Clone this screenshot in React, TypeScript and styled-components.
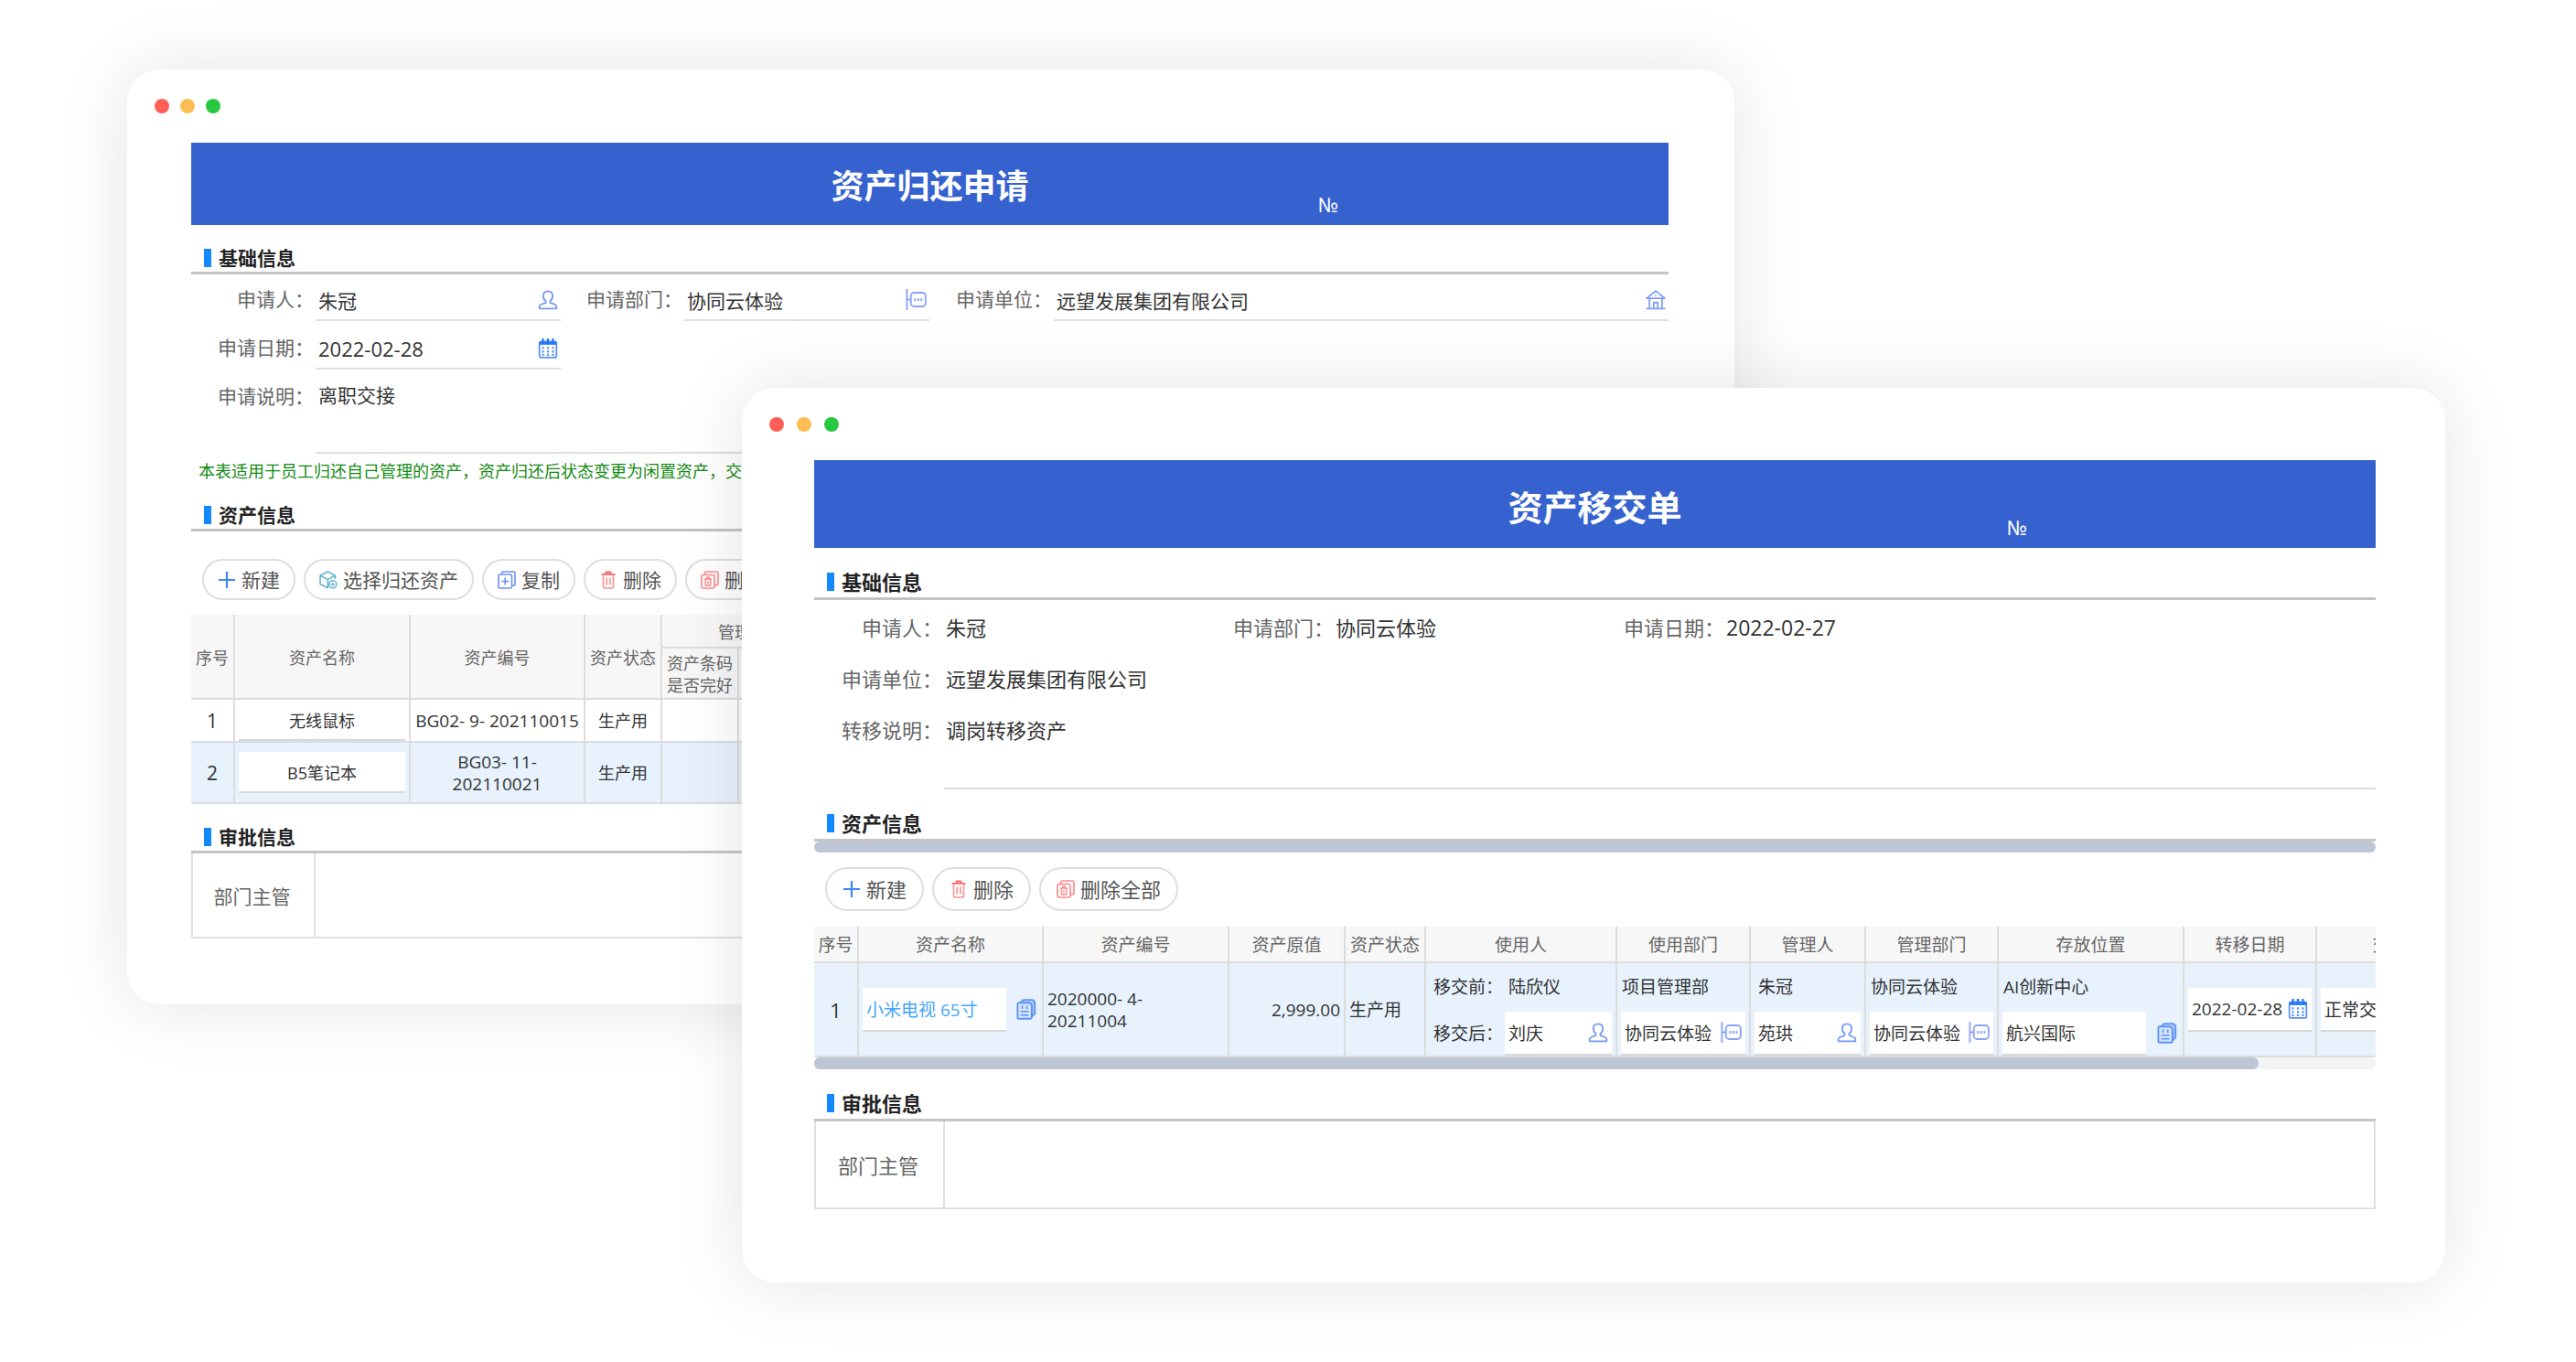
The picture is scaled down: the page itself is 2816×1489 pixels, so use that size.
import React from "react";
import styled, { createGlobalStyle, css } from "styled-components";

const GlobalStyle = createGlobalStyle`
  *, *::before, *::after { box-sizing: border-box; }
  body { margin: 0; background: #fff; }
  body, button, input, textarea, table {
    font-family: "Open Sans", "Noto Sans CJK SC", sans-serif;
  }
`;

/* ---------- desktop and windows ---------- */

const Desktop = styled.main`
  display: grid;
  grid-template-columns: 139fr 672fr 1085fr 777fr 143fr;
  align-items: start;
  min-height: 100vh;
  padding: 76px 0 88px;
`;

type Size = "small" | "large";

const smallVars = css`
  --text: 21px;
  --number: 22px;
  --cell: 18px;
  --code: 19px;
  --title: 36px;
  --side-left: 70px;
  --side-right: 72px;
  --dot-gap: 12px;
  --bar-height: 80px;
  --banner-height: 90px;
  --number-offset: 316px;
  --section-gap: 5px;
  --button-height: 45px;
  --button-pad: 15px;
  --approval-height: 93px;
  --approval-label: 134px;
`;

const largeVars = css`
  --text: 22px;
  --number: 23px;
  --cell: 19px;
  --code: 19px;
  --title: 38px;
  --side-left: 79px;
  --side-right: 76px;
  --dot-gap: 14px;
  --bar-height: 79px;
  --banner-height: 96px;
  --number-offset: 355px;
  --section-gap: 7px;
  --button-height: 48px;
  --button-pad: 17px;
  --approval-height: 96px;
  --approval-label: 141px;
`;

const Window = styled.section<{ $size: Size }>`
  ${(p) => (p.$size === "small" ? smallVars : largeVars)}
  grid-row: 1;
  grid-column: ${(p) => (p.$size === "small" ? "2 / 4" : "3 / 5")};
  margin-top: ${(p) => (p.$size === "small" ? 0 : 348)}px;
  padding: 0 var(--side-right) ${(p) => (p.$size === "small" ? 72 : 80)}px var(--side-left);
  background: #fff;
  border-radius: 36px;
  box-shadow: 0 0 80px rgba(0, 0, 0, 0.11);
  color: #333;
  font-size: var(--text);
  min-width: 0;
`;

const WindowBar = styled.div`
  display: flex;
  align-items: center;
  gap: var(--dot-gap);
  height: var(--bar-height);
  margin-left: calc(30px - var(--side-left));
`;

const Dot = styled.span<{ $color: string }>`
  width: 16px;
  height: 16px;
  border-radius: 50%;
  background: ${(p) => p.$color};
`;

const Banner = styled.header`
  display: grid;
  grid-template-columns: 1fr auto 1fr;
  align-items: center;
  height: var(--banner-height);
  background: #3562cf;
  color: #fff;
`;

const BannerTitle = styled.h1`
  grid-column: 2;
  margin: 0;
  padding-top: 6px;
  font-size: var(--title);
  line-height: 60px;
  font-weight: 700;
`;

const BannerNumber = styled.span`
  align-self: end;
  padding-left: var(--number-offset);
  margin-bottom: 8px;
  font-family: "Noto Sans", sans-serif;
  font-size: 22px;
  line-height: 30px;
`;

const SectionTitle = styled.h2<{ $top: number }>`
  display: flex;
  align-items: center;
  gap: 8px;
  margin: ${(p) => p.$top}px 0 0;
  padding: 0 0 var(--section-gap) 14px;
  border-bottom: 3px solid #c4c4c4;
  font-size: var(--text);
  line-height: 20px;
  font-weight: 700;
  color: #222;

  &::before {
    content: "";
    width: 8px;
    height: 20px;
    background: #1389ff;
  }
`;

/* ---------- forms ---------- */

const ReturnForm = styled.form`
  display: grid;
  grid-template-columns: 136px 268px 135px 268px 136px 1fr;
  row-gap: 8px;
  padding-top: 6px;
`;

const Label = styled.label`
  grid-column-start: 1;
  padding-right: 2px;
  text-align: right;
  line-height: 43px;
  color: #666;
  white-space: nowrap;
`;

const InlineLabel = styled(Label)`
  grid-column-start: auto;
`;

const FieldBox = styled.div`
  display: flex;
  align-items: center;
  height: 45px;
  padding: 0 3px;
  border-bottom: 2px solid #dedede;
`;

const TextInput = styled.input<{ $numeric?: boolean }>`
  flex: 1;
  min-width: 0;
  width: 100%;
  height: 100%;
  padding: 0;
  border: 0;
  outline: 0;
  background: transparent;
  color: #333;
  font-size: ${(p) => (p.$numeric ? "var(--number)" : "var(--text)")};
`;

const Remark = styled.textarea`
  grid-column: 2 / -1;
  height: 84px;
  padding: 0 3px;
  border: 0;
  border-bottom: 2px solid #dedede;
  outline: 0;
  resize: none;
  background: transparent;
  color: #333;
  font-size: var(--text);
  line-height: 40px;
`;

const IconButton = styled.button`
  display: inline-flex;
  flex: none;
  padding: 0;
  border: 0;
  background: none;
  cursor: pointer;
`;

const Note = styled.p`
  margin: 0;
  padding-left: 8px;
  color: #128a12;
  font-size: 18px;
  line-height: 38px;
`;

const TransferInfo = styled.dl`
  display: grid;
  grid-template-columns: 142px 316px 110px 317px 110px 1fr;
  row-gap: 2px;
  margin: 0;
  padding-top: 3px;
  line-height: 54px;

  dt {
    grid-column-start: auto;
    padding-right: 2px;
    text-align: right;
    color: #666;
    white-space: nowrap;
  }
  dt.first {
    grid-column-start: 1;
  }
  dd {
    margin: 0;
    padding-left: 2px;
  }
  dd.number {
    font-size: var(--number);
  }
  dd.wide {
    grid-column: 2 / -1;
  }
  dd.remark {
    height: 92px;
    border-bottom: 2px solid #dedede;
  }
`;

/* ---------- toolbars ---------- */

const Toolbar = styled.div<{ $top: number; $bottom: number }>`
  display: flex;
  gap: 9px;
  margin: ${(p) => p.$top}px 0 ${(p) => p.$bottom}px;
  padding-left: 12px;
`;

const ToolButton = styled.button`
  display: inline-flex;
  align-items: center;
  gap: 6px;
  height: var(--button-height);
  padding: 0 var(--button-pad);
  border: 2px solid #dedede;
  border-radius: 24px;
  background: #fff;
  color: #555;
  font-size: var(--text);
  line-height: 30px;
  white-space: nowrap;
  cursor: pointer;
`;

/* ---------- tables ---------- */

const TableClip = styled.div`
  overflow: hidden;
`;

const DataTable = styled.table<{ $width?: string }>`
  width: ${(p) => p.$width ?? "100%"};
  table-layout: fixed;
  border-collapse: separate;
  border-spacing: 0;
  font-size: var(--cell);
  line-height: 24px;
`;

const Th = styled.th`
  padding: 2px 0 0;
  border-right: 2px solid #dcdcdc;
  border-bottom: 2px solid #dcdcdc;
  background: #f7f7f7;
  color: #666;
  font-weight: 400;
`;

const Td = styled.td<{ $align?: "left" | "right"; $kind?: "code" | "index" }>`
  padding: 0 4px;
  border-right: 2px solid #dcdcdc;
  border-bottom: 2px solid #dcdcdc;
  text-align: ${(p) => p.$align ?? "center"};
  white-space: pre-line;
  ${(p) => p.$kind === "code" && "font-size: var(--code);"}
  ${(p) => p.$kind === "index" && "font-size: var(--text);"}
`;

const Row = styled.tr<{ $height: number; $active?: boolean }>`
  height: ${(p) => p.$height}px;
  background: ${(p) => (p.$active ? "#e7f2fd" : "#fff")};
`;

const CellField = styled.div<{ $width?: string; $height?: number }>`
  display: flex;
  align-items: center;
  width: ${(p) => p.$width ?? "100%"};
  height: ${(p) => p.$height ?? 48}px;
  padding: 0 4px;
  background: #fff;
  border-bottom: 2px solid #d6d9dd;
`;

const CellInput = styled.input<{ $center?: boolean; $link?: boolean }>`
  flex: 1;
  min-width: 0;
  width: 100%;
  height: 100%;
  padding: 0;
  border: 0;
  outline: 0;
  background: transparent;
  text-align: ${(p) => (p.$center ? "center" : "left")};
  color: ${(p) => (p.$link ? "#45a5fb" : "#333")};
  font-size: var(--cell);
`;

const Picker = styled.div`
  display: flex;
  align-items: center;
  justify-content: space-between;
  padding-right: 2px;
`;

const BeforeAfter = styled.div<{ $labelled?: boolean }>`
  display: grid;
  grid-template-columns: ${(p) => (p.$labelled ? "78px 1fr" : "1fr")};
  grid-template-rows: 52px 49px;
  align-items: center;
  padding-left: ${(p) => (p.$labelled ? 4 : 0)}px;
`;

const Before = styled.span<{ $indent?: boolean }>`
  padding-left: ${(p) => (p.$indent ? 4 : 1)}px;
`;

const ScrollTrack = styled.div<{ $height: number }>`
  height: ${(p) => p.$height}px;
  border-radius: 6px;
  background: #f3f3f3;
`;

const ScrollThumb = styled.div<{ $width: string }>`
  width: ${(p) => p.$width};
  height: 100%;
  border-radius: 6px;
  background: #bcc6d6;
`;

/* ---------- approvals ---------- */

const Approval = styled.div`
  display: grid;
  grid-template-columns: var(--approval-label) 1fr;
  height: var(--approval-height);
  border: 2px solid #e0e0e0;
  border-top: 0;
`;

const ApprovalLabel = styled.div`
  display: flex;
  align-items: center;
  justify-content: center;
  padding-right: 3px;
  border-right: 2px solid #e0e0e0;
  color: #666;
`;

/* ---------- icons ---------- */

type IconProps = { children: React.ReactNode; color: string; width?: number };

const Icon = ({ children, color, width = 20 }: IconProps) => (
  <svg
    width={width}
    height={width}
    viewBox="0 0 20 20"
    fill="none"
    stroke={color}
    strokeWidth="1.6"
    strokeLinejoin="round"
    aria-hidden="true"
  >
    {children}
  </svg>
);

const UserIcon = () => (
  <Icon color="#7797f6" width={22}>
    <path d="M10 1.2C7 1.2 5.3 3.3 5.3 6c0 2.1 1 4 2.5 5v1.6L3 14.6c-.9.4-1.5 1.100-1.500 2v1.900h17v-1.900c0-.9-.6-1.600-1.500-2l-4.800-2V11c1.500-1 2.500-2.900 2.500-5 0-2.700-1.700-4.800-4.700-4.800z" />
  </Icon>
);

const DepartmentIcon = () => (
  <Icon color="#8ba2f8" width={23}>
    <path d="M1.200 0v20M1.200 10H5" />
    <rect x="5" y="3.500" width="14" height="13" rx="3" />
    <path d="M8.200 10h1.600M11.200 10h1.600M14.200 10h1.600" strokeWidth="2.400" />
  </Icon>
);

const HouseIcon = () => (
  <Icon color="#7f9df7" width={22}>
    <path d="M1 8.200 10 1l9 7.200zM3.800 8.200v10M16.200 8.200v10M.5 18.600h19M8 18.500v-6h4v6" />
    <path d="M9.300 5.600h1.400" />
  </Icon>
);

const CalendarIcon = () => (
  <Icon color="#5b90f6" width={22}>
    <rect x="1.500" y="3" width="17" height="16" rx="1.800" />
    <path d="M1.500 4.800h17" stroke="#2b7df4" strokeWidth="3" />
    <path d="M5 0v5M10 0v5M15 0v5" stroke="#1f76f3" strokeWidth="2" />
    <path d="M4 9.500h12M4 13h12M4 16.300h12" strokeWidth="2" strokeDasharray="2 3" />
  </Icon>
);

const ListIcon = () => (
  <Icon color="#5f92f4" width={23}>
    <path d="M5 3.500 7.500 1h9L18.500 3v11L15.500 17" fill="#a9c8fb" />
    <path d="M3.500 3.700h10L15.500 6v11.500c0 .8-.5 1.400-1.300 1.400H3.500c-.8 0-1.400-.6-1.400-1.400V5.100c0-.8.6-1.400 1.400-1.400z" fill="#d3e3fd" />
    <path d="M6.500 6.500v3M11 6.500v3M5 12h7.500M5 15.400h7.500" strokeWidth="1.400" />
  </Icon>
);

const PlusIcon = () => (
  <Icon color="#3f87f5">
    <path d="M10 1v18M1 10h18" strokeWidth="2.200" />
  </Icon>
);

const BoxIcon = () => (
  <Icon color="#62b5d2">
    <path d="M17.500 9V5.200L9.300 1 1 5.200v9.300L9.300 19M1 5.200l8.300 4.200 8.200-4.200M9.300 9.400V19" />
    <circle cx="14.800" cy="14.800" r="4" />
    <path d="M12.800 14.800h4M14.800 12.800v4" strokeWidth="1.200" />
  </Icon>
);

const CopyIcon = () => (
  <Icon color="#6d8df7">
    <rect x="1" y="4" width="14.500" height="15" rx="2" />
    <path d="M4.500 4V2.800c0-1 .7-1.800 1.700-1.800h11c1 0 1.800.8 1.800 1.800v11.400c0 1-.8 1.800-1.800 1.800h-1.500M8.200 7.500v8M4.300 11.500h8" />
  </Icon>
);

const TrashIcon = () => (
  <Icon color="#fb9090">
    <path d="M2.500 3.800h15M7.500 3V1.500h5v1.500" stroke="#fa6464" strokeWidth="1.800" />
    <path d="M4.500 4v13.500c0 .9.6 1.500 1.500 1.500h8c.9 0 1.500-.6 1.500-1.500V4M8.200 7.500v8M11.800 7.500v8" />
  </Icon>
);

const TrashAllIcon = () => (
  <Icon color="#fb8a8a">
    <rect x="1" y="4.500" width="14" height="14.500" rx="2" />
    <path d="M4.500 4.200V2.800C4.500 1.800 5.200 1 6.200 1h11c1 0 1.800.8 1.800 1.800v11c0 1-.8 1.800-1.800 1.800h-1.700" />
    <path d="M4 9h8M6.700 8.500V7h2.600v1.500M5.200 9.500V16h5.600V9.500M8 11v3.500" strokeWidth="1.300" />
  </Icon>
);

/* ---------- shared pieces ---------- */

const WindowDots = () => (
  <WindowBar>
    <Dot $color="#ff5f57" />
    <Dot $color="#febc57" />
    <Dot $color="#28c840" />
  </WindowBar>
);

const Heading = ({ title }: { title: string }) => (
  <Banner>
    <BannerTitle>{title}</BannerTitle>
    <BannerNumber>№</BannerNumber>
  </Banner>
);

const ApprovalBlock = () => (
  <Approval>
    <ApprovalLabel>部门主管</ApprovalLabel>
  </Approval>
);

type FieldProps = {
  id: string;
  value: string;
  action: string;
  icon: React.ReactNode;
  numeric?: boolean;
};

const Field = ({ id, value, action, icon, numeric }: FieldProps) => (
  <FieldBox>
    <TextInput id={id} defaultValue={value} $numeric={numeric} />
    <IconButton type="button" aria-label={action}>
      {icon}
    </IconButton>
  </FieldBox>
);

/* ---------- asset return request ---------- */

const ReturnWindow = () => (
  <Window $size="small">
    <WindowDots />
    <Heading title="资产归还申请" />

    <SectionTitle $top={26}>基础信息</SectionTitle>
    <ReturnForm>
      <Label htmlFor="applicant">申请人：</Label>
      <Field id="applicant" value="朱冠" action="选择人员" icon={<UserIcon />} />
      <InlineLabel htmlFor="department">申请部门：</InlineLabel>
      <Field id="department" value="协同云体验" action="选择部门" icon={<DepartmentIcon />} />
      <InlineLabel htmlFor="company">申请单位：</InlineLabel>
      <Field id="company" value="远望发展集团有限公司" action="选择单位" icon={<HouseIcon />} />
      <Label htmlFor="date">申请日期：</Label>
      <Field id="date" value="2022-02-28" action="选择日期" icon={<CalendarIcon />} numeric />
      <Label htmlFor="remark">申请说明：</Label>
      <Remark id="remark" defaultValue="离职交接" />
    </ReturnForm>
    <Note>本表适用于员工归还自己管理的资产，资产归还后状态变更为闲置资产，交</Note>

    <SectionTitle $top={19}>资产信息</SectionTitle>
    <Toolbar $top={30} $bottom={16}>
      <ToolButton type="button"><PlusIcon />新建</ToolButton>
      <ToolButton type="button"><BoxIcon />选择归还资产</ToolButton>
      <ToolButton type="button"><CopyIcon />复制</ToolButton>
      <ToolButton type="button"><TrashIcon />删除</ToolButton>
      <ToolButton type="button"><TrashAllIcon />删除</ToolButton>
    </Toolbar>
    <DataTable>
      <colgroup>
        <col width="48" />
        <col width="192" />
        <col width="191" />
        <col width="84" />
        <col width="84" />
        <col width="76" />
        <col />
      </colgroup>
      <thead>
        <Row $height={37}>
          <Th rowSpan={2}>序号</Th>
          <Th rowSpan={2}>资产名称</Th>
          <Th rowSpan={2}>资产编号</Th>
          <Th rowSpan={2}>资产状态</Th>
          <Th colSpan={2}>管理</Th>
          <Th rowSpan={2} />
        </Row>
        <Row $height={56}>
          <Th>资产条码是否完好</Th>
          <Th />
        </Row>
      </thead>
      <tbody>
        <Row $height={47}>
          <Td $kind="index">1</Td>
          <Td>
            <CellField $height={45}>
              <CellInput aria-label="资产名称 1" defaultValue="无线鼠标" $center />
            </CellField>
          </Td>
          <Td $kind="code">BG02- 9- 202110015</Td>
          <Td>生产用</Td>
          <Td />
          <Td />
          <Td />
        </Row>
        <Row $height={67} $active>
          <Td $kind="index">2</Td>
          <Td>
            <CellField $height={45}>
              <CellInput aria-label="资产名称 2" defaultValue="B5笔记本" $center />
            </CellField>
          </Td>
          <Td $kind="code">{"BG03- 11-\n202110021"}</Td>
          <Td>生产用</Td>
          <Td />
          <Td />
          <Td />
        </Row>
      </tbody>
    </DataTable>

    <SectionTitle $top={26}>审批信息</SectionTitle>
    <ApprovalBlock />
  </Window>
);

/* ---------- asset transfer form ---------- */

const TransferWindow = () => (
  <Window $size="large">
    <WindowDots />
    <Heading title="资产移交单" />

    <SectionTitle $top={27}>基础信息</SectionTitle>
    <TransferInfo>
      <dt className="first">申请人：</dt>
      <dd>朱冠</dd>
      <dt>申请部门：</dt>
      <dd>协同云体验</dd>
      <dt>申请日期：</dt>
      <dd className="number">2022-02-27</dd>
      <dt className="first">申请单位：</dt>
      <dd className="wide">远望发展集团有限公司</dd>
      <dt className="first">转移说明：</dt>
      <dd className="wide remark">调岗转移资产</dd>
    </TransferInfo>

    <SectionTitle $top={27}>资产信息</SectionTitle>
    <ScrollTrack $height={12}>
      <ScrollThumb $width="100%" />
    </ScrollTrack>
    <Toolbar $top={16} $bottom={17}>
      <ToolButton type="button"><PlusIcon />新建</ToolButton>
      <ToolButton type="button"><TrashIcon />删除</ToolButton>
      <ToolButton type="button"><TrashAllIcon />删除全部</ToolButton>
    </Toolbar>
    <TableClip>
      <DataTable $width="1785px">
        <colgroup>
          {[49, 202, 203, 127, 88, 209, 146, 126, 145, 203, 145, 142].map((w, i) => (
            <col key={i} width={w} />
          ))}
        </colgroup>
        <thead>
          <Row $height={40}>
            <Th>序号</Th>
            <Th>资产名称</Th>
            <Th>资产编号</Th>
            <Th>资产原值</Th>
            <Th>资产状态</Th>
            <Th>使用人</Th>
            <Th>使用部门</Th>
            <Th>管理人</Th>
            <Th>管理部门</Th>
            <Th>存放位置</Th>
            <Th>转移日期</Th>
            <Th>交</Th>
          </Row>
        </thead>
        <tbody>
          <Row $height={102} $active>
            <Td $kind="index">1</Td>
            <Td>
              <Picker>
                <CellField $width="157px">
                  <CellInput aria-label="资产名称" defaultValue="小米电视 65寸" $link />
                </CellField>
                <IconButton type="button" aria-label="选择资产"><ListIcon /></IconButton>
              </Picker>
            </Td>
            <Td $align="left" $kind="code">{"2020000- 4-\n20211004"}</Td>
            <Td $align="right" $kind="code">2,999.00</Td>
            <Td $align="left">生产用</Td>
            <Td $align="left">
              <BeforeAfter $labelled>
                <span>移交前：</span>
                <Before $indent>陆欣仪</Before>
                <label htmlFor="new-user">移交后：</label>
                <CellField>
                  <CellInput id="new-user" defaultValue="刘庆" />
                  <IconButton type="button" aria-label="选择使用人"><UserIcon /></IconButton>
                </CellField>
              </BeforeAfter>
            </Td>
            <Td $align="left">
              <BeforeAfter>
                <Before>项目管理部</Before>
                <CellField>
                  <CellInput aria-label="使用部门" defaultValue="协同云体验" />
                  <IconButton type="button" aria-label="选择使用部门"><DepartmentIcon /></IconButton>
                </CellField>
              </BeforeAfter>
            </Td>
            <Td $align="left">
              <BeforeAfter>
                <Before $indent>朱冠</Before>
                <CellField>
                  <CellInput aria-label="管理人" defaultValue="苑珙" />
                  <IconButton type="button" aria-label="选择管理人"><UserIcon /></IconButton>
                </CellField>
              </BeforeAfter>
            </Td>
            <Td $align="left">
              <BeforeAfter>
                <Before>协同云体验</Before>
                <CellField>
                  <CellInput aria-label="管理部门" defaultValue="协同云体验" />
                  <IconButton type="button" aria-label="选择管理部门"><DepartmentIcon /></IconButton>
                </CellField>
              </BeforeAfter>
            </Td>
            <Td $align="left">
              <BeforeAfter>
                <Before>AI创新中心</Before>
                <Picker>
                  <CellField $width="157px">
                    <CellInput aria-label="存放位置" defaultValue="航兴国际" />
                  </CellField>
                  <IconButton type="button" aria-label="选择位置"><ListIcon /></IconButton>
                </Picker>
              </BeforeAfter>
            </Td>
            <Td>
              <CellField>
                <CellInput aria-label="转移日期" defaultValue="2022-02-28" />
                <IconButton type="button" aria-label="选择日期"><CalendarIcon /></IconButton>
              </CellField>
            </Td>
            <Td>
              <CellField>
                <CellInput aria-label="交接" defaultValue="正常交" />
              </CellField>
            </Td>
          </Row>
        </tbody>
      </DataTable>
    </TableClip>
    <ScrollTrack $height={13}>
      <ScrollThumb $width="92.5%" />
    </ScrollTrack>

    <SectionTitle $top={27}>审批信息</SectionTitle>
    <ApprovalBlock />
  </Window>
);

export default function App() {
  return (
    <>
      <GlobalStyle />
      <Desktop>
        <ReturnWindow />
        <TransferWindow />
      </Desktop>
    </>
  );
}
